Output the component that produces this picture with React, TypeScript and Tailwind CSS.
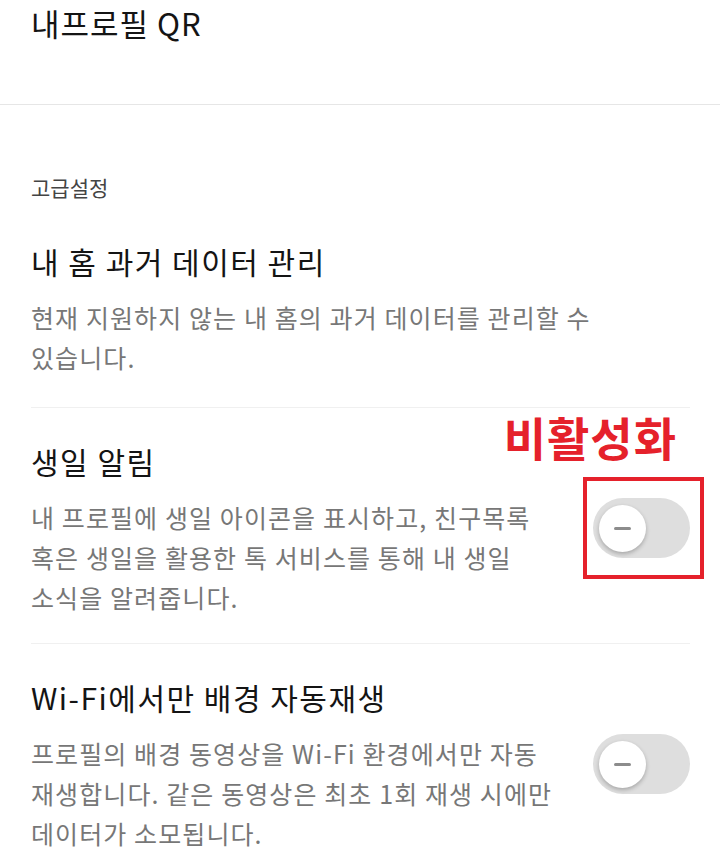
import React from 'react';

const font = { fontFamily: '"Noto Sans CJK KR", "Noto Sans", sans-serif' };

interface SettingRowProps {
    title: string;
    lines: string[];
    toggle?: boolean;
    highlighted?: boolean;
    className?: string;
}

// Off-state switch: grey track, white knob with a dash
function OffSwitch() {
    return (
        <div className="w-[97px] h-[60px] rounded-full bg-[#dedede] flex items-center pl-[6px]">
            <div className="w-[47px] h-[47px] rounded-full bg-white shadow-[0_2px_4px_rgba(0,0,0,0.25)] flex items-center justify-center">
                <div className="w-[17px] h-[3px] rounded-sm bg-[#8c8c8c]" />
            </div>
        </div>
    );
}

function SettingRow({ title, lines, toggle, highlighted, className = '' }: SettingRowProps) {
    return (
        <div className={`relative border-t border-[#f0f0f0] ${className}`}>
            <h3 className="text-[30px] leading-[40px] tracking-[1.5px] text-[#141414]">{title}</h3>
            <p className="mt-[16px] text-[25px] leading-[40px] tracking-[1.1px] text-[#777]">
                {lines.map((line, i) => (
                    <span key={i} className="block">{line}</span>
                ))}
            </p>
            {toggle && (
                <div className="absolute right-0 top-[90px]">
                    <OffSwitch />
                </div>
            )}
            {highlighted && (
                <>
                    <span className="absolute right-[13px] top-[2px] text-[46px] leading-[52px] tracking-[1px] font-bold text-[#e5212b]">비활성화</span>
                    <div className="absolute right-[-14px] top-[69px] w-[121px] h-[102px] border-[4px] border-[#e5212b]" />
                </>
            )}
        </div>
    );
}

export default function App() {
    return (
        <div className="w-[720px] h-[850px] bg-white overflow-hidden" style={font}>
            <header className="h-[105px] border-b border-[#e6e6e6] px-[31px] pt-[3px]">
                <h1 className="text-[31px] leading-[40px] tracking-[1px] text-[#141414]">내프로필 QR</h1>
            </header>

            <section className="pl-[31px] pr-[30px]">
                <div className="pt-[68px] text-[21px] leading-[28px] text-[#444]">고급설정</div>

                <SettingRow
                    className="mt-[40px] border-t-0 pb-[30px]"
                    title="내 홈 과거 데이터 관리"
                    lines={['현재 지원하지 않는 내 홈의 과거 데이터를 관리할 수', '있습니다.']}
                />
                <SettingRow
                    className="pt-[33px] pb-[26px]"
                    title="생일 알림"
                    lines={['내 프로필에 생일 아이콘을 표시하고, 친구목록', '혹은 생일을 활용한 톡 서비스를 통해 내 생일', '소식을 알려줍니다.']}
                    toggle
                    highlighted
                />
                <SettingRow
                    className="pt-[33px] pb-[26px]"
                    title="Wi-Fi에서만 배경 자동재생"
                    lines={['프로필의 배경 동영상을 Wi-Fi 환경에서만 자동', '재생합니다. 같은 동영상은 최초 1회 재생 시에만', '데이터가 소모됩니다.']}
                    toggle
                />
            </section>
        </div>
    );
}
